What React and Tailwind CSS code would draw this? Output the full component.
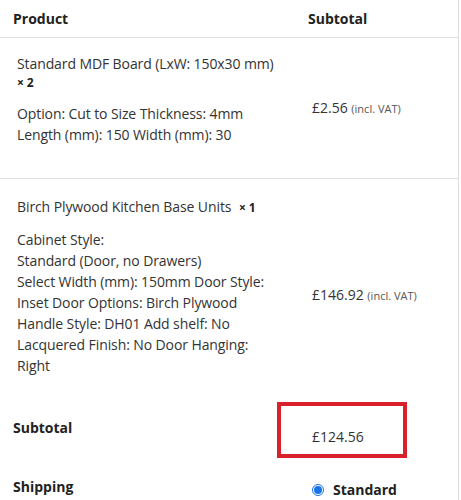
const FONT = { fontFamily: '"Open Sans", "Liberation Sans", sans-serif' }

const Price = ({ value }) => (
    <span className="text-[14px] text-[#333]">
        {value} <span className="text-[11px] text-[#555]">(incl. VAT)</span>
    </span>
)

export default function App() {
    return (
        <div style={FONT} className="w-[461px] h-[500px] overflow-hidden bg-white">
            <div className="w-[459px] h-full border-r border-[#dcdcdc]">
                {/* header */}
                <div className="flex h-[38px] items-center border-b border-[#e2e2e2]">
                    <div className="w-[308px] pl-[13px] text-[14px] font-bold text-[#222]">Product</div>
                    <div className="text-[14px] font-bold text-[#222]">Subtotal</div>
                </div>

                {/* row 1 */}
                <div className="flex h-[141px] border-b border-[#e2e2e2]">
                    <div className="w-[312px] pl-[17px] pt-[16px] text-[14px] tracking-[-0.1px] text-[#333]">
                        <p className="leading-[19px]">Standard MDF Board (LxW: 150x30 mm)</p>
                        <p className="leading-[19px] font-bold text-[12px] text-[#222]">× 2</p>
                        <div className="mt-[11px] leading-[21px]">
                            <p>Option: Cut to Size Thickness: 4mm</p>
                            <p>Length (mm): 150 Width (mm): 30</p>
                        </div>
                    </div>
                    <div className="flex items-center pb-[2px]">
                        <Price value="£2.56" />
                    </div>
                </div>

                {/* row 2 */}
                <div className="flex h-[225px]">
                    <div className="w-[312px] pl-[17px] pt-[17px] text-[14px] tracking-[-0.1px] text-[#333]">
                        <p className="leading-[21px]">
                            Birch Plywood Kitchen Base Units <span className="ml-1 font-bold text-[12px] text-[#222]">× 1</span>
                        </p>
                        <div className="mt-[11px] leading-[21px]">
                            <p>Cabinet Style:</p>
                            <p>Standard (Door, no Drawers)</p>
                            <p>Select Width (mm): 150mm Door Style:</p>
                            <p>Inset Door Options: Birch Plywood</p>
                            <p>Handle Style: DH01 Add shelf: No</p>
                            <p>Lacquered Finish: No Door Hanging:</p>
                            <p>Right</p>
                        </div>
                    </div>
                    <div className="flex items-center pt-[6px]">
                        <Price value="£146.92" />
                    </div>
                </div>

                {/* subtotal */}
                <div className="flex items-center h-[56px] -mt-[2px]">
                    <div className="w-[277px] pl-[13px] pb-[6px] text-[14px] font-bold text-[#222]">Subtotal</div>
                    <div className="w-[130px] h-[56px] border-4 border-[#d9212b] pl-[31px] pt-[20px] text-[14px] text-[#333]">
                        £124.56
                    </div>
                </div>

                {/* shipping */}
                <div className="flex items-center mt-[21px]">
                    <div className="w-[312px] pl-[13px] -mt-[6px] text-[14px] font-bold text-[#222]">Shipping</div>
                    <span className="w-[12px] h-[12px] rounded-full border border-[#1a73e8] flex items-center justify-center">
                        <span className="w-[8px] h-[8px] rounded-full bg-[#1a73e8]" />
                    </span>
                    <span className="ml-[9px] text-[14px] font-bold text-[#222]">Standard</span>
                </div>
            </div>
        </div>
    )
}
